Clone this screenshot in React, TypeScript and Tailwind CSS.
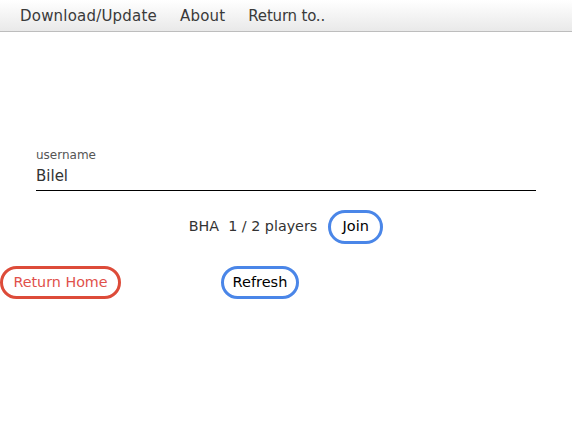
export default function App() {
  const font = { fontFamily: '"DejaVu Sans", Verdana, sans-serif' };
  return (
    <div className="min-h-[429px] w-[572px] bg-white text-[#333]" style={font}>
      {/* NAV */}
      <nav className="flex h-[32px] items-center gap-[23px] border-b border-[#bdbdbd] bg-gradient-to-b from-white to-[#e9e9e9] px-[20px] pt-[1px] text-[15px] tracking-[0.2px] text-[#3a3a3a]">
        <span>Download/Update</span>
        <span>About</span>
        <span className="tracking-[-0.2px]">Return to..</span>
      </nav>

      {/* FORM */}
      <div className="px-[36px] pt-[116px]">
        <div className="text-[12px] leading-[15px] text-[#555]">username</div>
        <div className="mt-[4px] border-b border-black pb-[4px] text-[15px] leading-[19px] text-[#333]">Bilel</div>
      </div>

      {/* ROOM */}
      <div className="mt-[19px] flex items-center justify-center gap-[11px]">
        <span className="text-[14.3px] text-[#333]">BHA&nbsp;&nbsp;1 / 2 players</span>
        <button className="h-[34px] w-[55px] rounded-full border-[3px] border-[#4a86e8] text-[14.5px] text-black">Join</button>
      </div>

      {/* ACTIONS */}
      <div className="mt-[22px] flex items-center gap-[100px]">
        <button className="h-[33px] w-[121px] rounded-full border-[3px] border-[#dd4b39] text-[14.3px] text-[#e0504a]">Return Home</button>
        <button className="h-[33px] w-[78px] rounded-full border-[3px] border-[#4a86e8] text-[14.5px] text-black">Refresh</button>
      </div>
    </div>
  );
}
